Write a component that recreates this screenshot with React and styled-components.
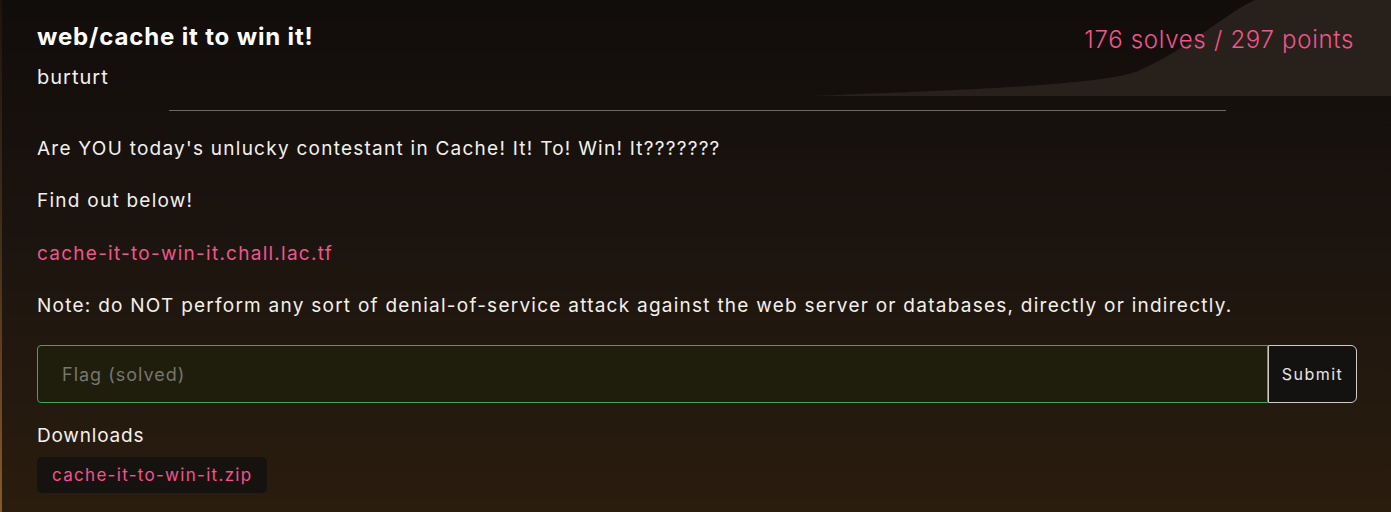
import React from "react";
import styled, { createGlobalStyle } from "styled-components";

const Global = createGlobalStyle`
  html, body { margin: 0; padding: 0; }
  body {
    font-family: "Inter", "Open Sans", sans-serif;
    background: #120e0b;
  }
`;

const Page = styled.div`
  position: relative;
  width: 1391px;
  height: 512px;
  box-sizing: border-box;
  overflow: hidden;
  background: linear-gradient(180deg, #110d0b 0%, #1a130e 40%, #2a1d0e 100%);
  border-left: 2px solid;
  border-image: linear-gradient(180deg, #1e140d 0%, #4a3018 50%, #8a5a26 100%) 1;
  color: #f3f0ec;
`;

const Decor = styled.svg`
  position: absolute;
  top: 0;
  right: 0;
  width: 581px;
  height: 96px;
  pointer-events: none;
`;

const Content = styled.div`
  position: relative;
  display: flex;
  flex-direction: column;
  padding: 19px 34px 0 35px;
`;

const Header = styled.div`
  display: flex;
  justify-content: space-between;
  align-items: flex-start;
`;

const TitleBlock = styled.div`
  display: flex;
  flex-direction: column;
`;

const Title = styled.h1`
  margin: 0;
  font-size: 24px;
  font-weight: 700;
  line-height: 36px;
  letter-spacing: 0.85px;
  color: #ffffff;
`;

const Author = styled.div`
  margin-top: 8px;
  font-size: 20px;
  line-height: 28px;
  letter-spacing: 1px;
  color: #f3f0ec;
`;

const Points = styled.div`
  margin-top: 5px;
  padding-right: 3px;
  font-size: 24px;
  font-weight: 300;
  line-height: 32px;
  letter-spacing: 0.7px;
  color: #f2548c;
`;

const Divider = styled.hr`
  align-self: center;
  width: 1057px;
  margin: 19px 0 0 0;
  border: none;
  border-top: 1px solid #6e6862;
`;

const Para = styled.p`
  margin: ${(p) => (p.$first ? "23px" : "22.4px")} 0 0 0;
  font-size: 19px;
  line-height: 30px;
  letter-spacing: 1.25px;
  color: ${(p) => (p.$link ? "#f2548c" : "#f3f0ec")};
`;

const FlagRow = styled.form`
  display: flex;
  margin-top: 24px;
  height: 58px;
`;

const FlagInput = styled.input`
  flex: 1;
  box-sizing: border-box;
  height: 58px;
  padding: 0 24px;
  background: #1f1e0d;
  border: 1px solid #3aa95a;
  border-radius: 4px 0 0 4px;
  font-family: inherit;
  font-size: 18px;
  letter-spacing: 1px;
  color: #eee;
  outline: none;
  &::placeholder { color: #77756e; }
`;

const SubmitButton = styled.button`
  box-sizing: border-box;
  width: 89px;
  height: 58px;
  background: #141210;
  border: 1px solid #cfccc8;
  border-radius: 0 6px 6px 0;
  font-family: inherit;
  font-size: 16px;
  letter-spacing: 1.5px;
  color: #e8e6e3;
`;

const Label = styled.div`
  margin-top: 20px;
  font-size: 19px;
  line-height: 26px;
  letter-spacing: 0.8px;
  color: #f3f0ec;
`;

const Chip = styled.a`
  align-self: flex-start;
  margin-top: 8px;
  padding: 0 15px;
  height: 36px;
  display: flex;
  align-items: center;
  background: #161210;
  border-radius: 5px;
  font-size: 17px;
  letter-spacing: 1.3px;
  color: #f2548c;
  text-decoration: none;
`;

export default function App() {
  return (
    <>
      <Global />
      <Page>
        <Decor viewBox="0 0 581 96" preserveAspectRatio="none">
          <path
            d="M0 96 C 150 90, 300 85, 330 70 C 380 48, 420 10, 445 0 L 581 0 L 581 96 Z"
            fill="#27201b"
          />
        </Decor>
        <Content>
          <Header>
            <TitleBlock>
              <Title>web/cache it to win it!</Title>
              <Author>burturt</Author>
            </TitleBlock>
            <Points>176 solves / 297 points</Points>
          </Header>
          <Divider />
          <Para $first>Are YOU today's unlucky contestant in Cache! It! To! Win! It???????</Para>
          <Para>Find out below!</Para>
          <Para $link>cache-it-to-win-it.chall.lac.tf</Para>
          <Para>
            Note: do NOT perform any sort of denial-of-service attack against the web server or
            databases, directly or indirectly.
          </Para>
          <FlagRow onSubmit={(e) => e.preventDefault()}>
            <FlagInput placeholder="Flag (solved)" />
            <SubmitButton type="submit">Submit</SubmitButton>
          </FlagRow>
          <Label>Downloads</Label>
          <Chip href="#">cache-it-to-win-it.zip</Chip>
        </Content>
      </Page>
    </>
  );
}
